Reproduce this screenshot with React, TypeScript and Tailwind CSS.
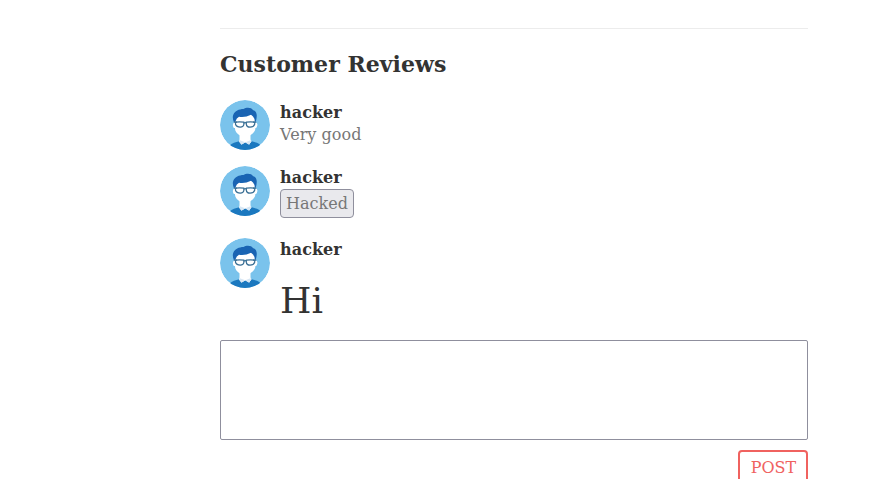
import type { ReactNode } from "react";

function Avatar() {
  return (
    <svg viewBox="0 0 50 50" className="block size-[50px] shrink-0 rounded-full">
      <circle cx="25" cy="25" r="25" fill="#7ac3ec" />
      <path d="M9 50 10 45.5Q11 44 14 42.8L20 41H31L37 42.8Q39.500 43.600 41 46V50Z" fill="#1b78bf" />
      <path d="M19.500 32H30.500V39.500L31.500 41.500 29 44.500 25.300 42.500 21.500 44.500 19 41.500 19.500 39.500Z" fill="#fff" />
      <path d="m18.700 41 2.700 3.700 3.900-2.400 3.900 2.400 2.300-3.700-1.100-.8-5.100 2-5.400-2Z" fill="#d8e7f4" />
      <path d="M14.800 15H35.500V22.500Q37.900 22.800 37.300 25.500 36.800 28.300 35.400 28C35.400 31.500 32.500 34 29.500 35.800Q25.200 38 20.500 35.800C17 34 15 31.500 14.900 28C12.500 28.300 12.100 22.800 14.500 22.500Z" fill="#fff" />
      <path d="M14 22.300C12.700 19.500 12.400 16.500 13.400 14.500 14.800 11 19 8.900 23.500 8.900 26 7.200 31.500 6.900 33.200 10.300 35.900 10.700 37 13.500 36.700 16.500 36.600 19 36 21 35.700 22.300L34.700 21Q34.700 18.500 33 16.500L31 14.700Q25 17.800 19 16.700 16.500 18 15.400 21.500Z" fill="#1964b3" />
      <g fill="none" stroke="#386e94" strokeWidth="1.200">
        <path d="M13.800 22.200H17M33 22.200H36.200M23.500 23.200Q25.200 22.200 26.800 23.200" />
        <path d="M15.500 22.200Q19.700 21.400 23.900 22.200V24.300Q23.600 27.200 20.300 27.200 16.500 27.200 15.500 24.300Z" />
        <path d="M26.300 22.200Q30.500 21.400 34.700 22.200V24.300Q33.600 27.200 30 27.200 26.700 27.200 26.300 24.300Z" />
      </g>
    </svg>
  );
}

function Review({ author, className, children }: { author: string; className: string; children: ReactNode }) {
  return (
    <article className={`flex gap-2.5 ${className}`}>
      <Avatar />
      <div>
        <h3 className="text-base leading-[22px] font-bold tracking-[0.07px] text-[#333332]">{author}</h3>
        {children}
      </div>
    </article>
  );
}

export default function App() {
  return (
    <main className="h-[479px] overflow-hidden bg-white pt-7 pl-[220px] font-['DejaVu_Serif',serif] text-base text-[#777]">
      <section className="w-[588px] border-t border-[#ececec] pt-5">
        <h2 className="text-[22px] leading-[30px] font-bold tracking-[0.02px] text-[#333332]">Customer Reviews</h2>
        <div className="pt-[21px]">
          <Review author="hacker" className="h-[66px] [&>div]:pt-0.5">
            <p className="leading-[22px] tracking-[0.05px]">Very good</p>
          </Review>
          <Review author="hacker" className="h-[72px] [&>div]:pt-px">
            <button className="block h-[29px] w-[74px] rounded-[4px] border border-[#8f8f9d] bg-[#e9e9ed] leading-[27px] tracking-[0.05px]">
              Hacked
            </button>
          </Review>
          <Review author="hacker" className="h-[102px] [&>div]:pt-px">
            <h1 className="pt-[17px] text-4xl leading-[46px] text-[#333332]">Hi</h1>
          </Review>
        </div>
        <textarea aria-label="Review" className="block h-[100px] w-full resize-none rounded-[2px] border border-[#8f8f9d] bg-white p-1 outline-none" />
        <div className="flex justify-end pt-2.5">
          <button className="h-9 w-[70px] rounded border-2 border-[#f0625f] pl-[0.8px] text-[#f0625f]">POST</button>
        </div>
      </section>
    </main>
  );
}
